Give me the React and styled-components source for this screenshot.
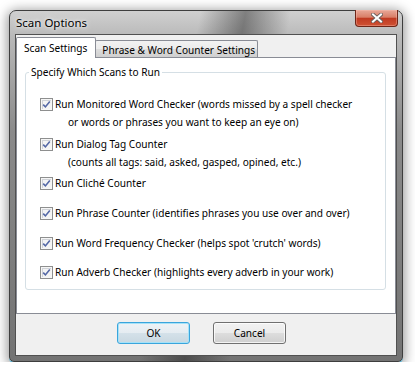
import React from 'react';
import styled, { createGlobalStyle } from 'styled-components';

const GlobalStyle = createGlobalStyle`
  html, body {
    margin: 0;
    padding: 0;
    background: #ffffff;
  }
  body {
    font-family: "Noto Sans", "DejaVu Sans", sans-serif;
    font-size: 10.1px;
    color: #000;
  }
`;

// Aero glass frame
const Window = styled.div`
  box-sizing: border-box;
  width: 394px;
  height: 352px;
  margin: 10px 0 0 9px;
  padding: 0 6px 6px 6px;
  display: flex;
  flex-direction: column;
  border: 1px solid #3e3e3e;
  border-radius: 7px 7px 5px 5px;
  background:
    linear-gradient(100deg, transparent 42%, rgba(30, 30, 30, 0.45) 52%, transparent 62%),
    linear-gradient(to bottom, #d0d0d0 0px, #b8b8b8 26px, #8a8a8a 120px, #737373 100%);
  box-shadow:
    0 1px 0 0 #45b6e0,
    0 2px 12px 2px rgba(0, 0, 0, 0.4);
`;

const TitleBar = styled.div`
  height: 24px;
  margin: 0 -6px;
  padding: 0 4px 0 6px;
  display: flex;
  align-items: flex-start;
  justify-content: space-between;
`;

const Title = styled.div`
  margin-top: 4px;
  font-size: 11.5px;
  line-height: 16px;
  color: #000;
  text-shadow: 0 0 6px rgba(255, 255, 255, 0.9), 0 0 3px rgba(255, 255, 255, 0.8);
`;

const CloseButton = styled.div`
  box-sizing: border-box;
  width: 43px;
  height: 17px;
  margin-top: -1px;
  display: flex;
  align-items: center;
  justify-content: center;
  border: 1px solid #6e2618;
  border-top: none;
  border-radius: 0 0 4px 4px;
  background: linear-gradient(
    to bottom,
    #e8a898 0%,
    #d97e68 45%,
    #c03a22 52%,
    #cf5234 100%
  );
  box-shadow: inset 0 0 0 1px rgba(255, 200, 190, 0.35);
`;

const Client = styled.div`
  flex: 1;
  display: flex;
  flex-direction: column;
  background: #f0f0f0;
  box-shadow: 0 0 0 1px #505050;
`;

const TabStrip = styled.div`
  box-sizing: border-box;
  height: 22px;
  padding-top: 2px;
  display: flex;
  align-items: flex-end;
`;

const Tab = styled.div`
  box-sizing: border-box;
  position: relative;
  display: flex;
  align-items: center;
  white-space: nowrap;
  border: 1px solid #898c95;
  border-radius: 2px 2px 0 0;
  ${p =>
    p.$active
      ? `
    z-index: 1;
    height: 21px;
    margin-bottom: -1px;
    padding: 0 8px 0 7px;
    border-bottom: none;
    background: #ffffff;
  `
      : `
    height: 17px;
    margin-left: -1px;
    padding: 1px 2px 0 6px;
    border-bottom: none;
    background: linear-gradient(to bottom, #f2f2f2 0%, #ebebeb 50%, #dddddd 51%, #cfcfcf 100%);
  `}
`;

const Panel = styled.div`
  box-sizing: border-box;
  height: 257px;
  padding: 7px 9px 0 8px;
  background: #ffffff;
  border: 1px solid #898c95;
`;

const Group = styled.fieldset`
  margin: 0;
  min-inline-size: 0;
  padding: 0 0 0 3px;
  border: 1px solid #d5dfe5;
  border-radius: 3px;
`;

const Legend = styled.legend`
  padding: 0 2px;
  line-height: 14px;
`;

const List = styled.div`
  padding: 16px 0 8px 11px;
  display: flex;
  flex-direction: column;
`;

const Row = styled.div`
  display: flex;
  align-items: flex-start;
  margin-top: ${p => p.$gap || 0}px;
`;

const Box = styled.span`
  box-sizing: border-box;
  flex: none;
  width: 13px;
  height: 13px;
  margin: 3px 2px 0 0;
  display: flex;
  align-items: center;
  justify-content: center;
  border: 1px solid #8e8f8f;
  background: #f4f4f4;
  box-shadow: inset 0 0 0 1px #f6f6f6, inset 1px 1px 0 1px #d0d3d8;
`;

const Label = styled.div`
  line-height: 18px;
  white-space: nowrap;
`;

const SubLine = styled.div`
  padding-left: 13px;
`;

const Footer = styled.div`
  flex: 1;
  display: flex;
  justify-content: center;
  align-items: flex-start;
  gap: 23px;
  padding: 8px 9px 0 0;
`;

const Button = styled.button`
  box-sizing: border-box;
  width: 73px;
  height: 22px;
  padding: 0;
  font-family: inherit;
  font-size: 10.1px;
  color: #000;
  border-radius: 3px;
  border: 1px solid ${p => (p.$primary ? '#3aa5dc' : '#707070')};
  background: ${p =>
    p.$primary
      ? 'linear-gradient(to bottom, #eef3f6 0%, #e5ecf1 50%, #d4e1e9 51%, #c9d8e1 100%)'
      : 'linear-gradient(to bottom, #f2f2f2 0%, #ebebeb 50%, #dddddd 51%, #cfcfcf 100%)'};
  box-shadow: inset 0 0 0 1px ${p => (p.$primary ? '#a6e2f8' : 'rgba(255, 255, 255, 0.75)')};
`;

function CheckMark() {
  return (
    <svg width="11" height="11" viewBox="0 0 11 11">
      <path d="M2.2 5.6 L4.4 7.9 L8.8 2.4" fill="none" stroke="#5468a6" strokeWidth="1.6" />
    </svg>
  );
}

function CloseGlyph() {
  return (
    <svg width="12" height="10" viewBox="0 0 12 10">
      <path d="M2 1.5 L10 8.5 M10 1.5 L2 8.5" stroke="#6a5f5d" strokeWidth="3.8" strokeLinecap="square" />
      <path d="M2 1.5 L10 8.5 M10 1.5 L2 8.5" stroke="#ffffff" strokeWidth="2" strokeLinecap="square" />
    </svg>
  );
}

const scans = [
  {
    text: 'Run Monitored Word Checker (words missed by a spell checker',
    sub: 'or words or phrases you want to keep an eye on)',
    gap: 0,
  },
  {
    text: 'Run Dialog Tag Counter',
    sub: '(counts all tags: said, asked, gasped, opined, etc.)',
    gap: 4,
  },
  { text: 'Run Cliché Counter', gap: 3 },
  { text: 'Run Phrase Counter (identifies phrases you use over and over)', gap: 12 },
  { text: "Run Word Frequency Checker (helps spot 'crutch' words)", gap: 12 },
  { text: 'Run Adverb Checker (highlights every adverb in your work)', gap: 11 },
];

export default function App() {
  return (
    <>
      <GlobalStyle />
      <Window>
        <TitleBar>
          <Title>Scan Options</Title>
          <CloseButton>
            <CloseGlyph />
          </CloseButton>
        </TitleBar>
        <Client>
          <TabStrip>
            <Tab $active>Scan Settings</Tab>
            <Tab>Phrase &amp; Word Counter Settings</Tab>
          </TabStrip>
          <Panel>
            <Group>
              <Legend>Specify Which Scans to Run</Legend>
              <List>
                {scans.map(s => (
                  <Row key={s.text} $gap={s.gap}>
                    <Box>
                      <CheckMark />
                    </Box>
                    <Label>
                      <div>{s.text}</div>
                      {s.sub && <SubLine>{s.sub}</SubLine>}
                    </Label>
                  </Row>
                ))}
              </List>
            </Group>
          </Panel>
          <Footer>
            <Button $primary>OK</Button>
            <Button>Cancel</Button>
          </Footer>
        </Client>
      </Window>
    </>
  );
}
